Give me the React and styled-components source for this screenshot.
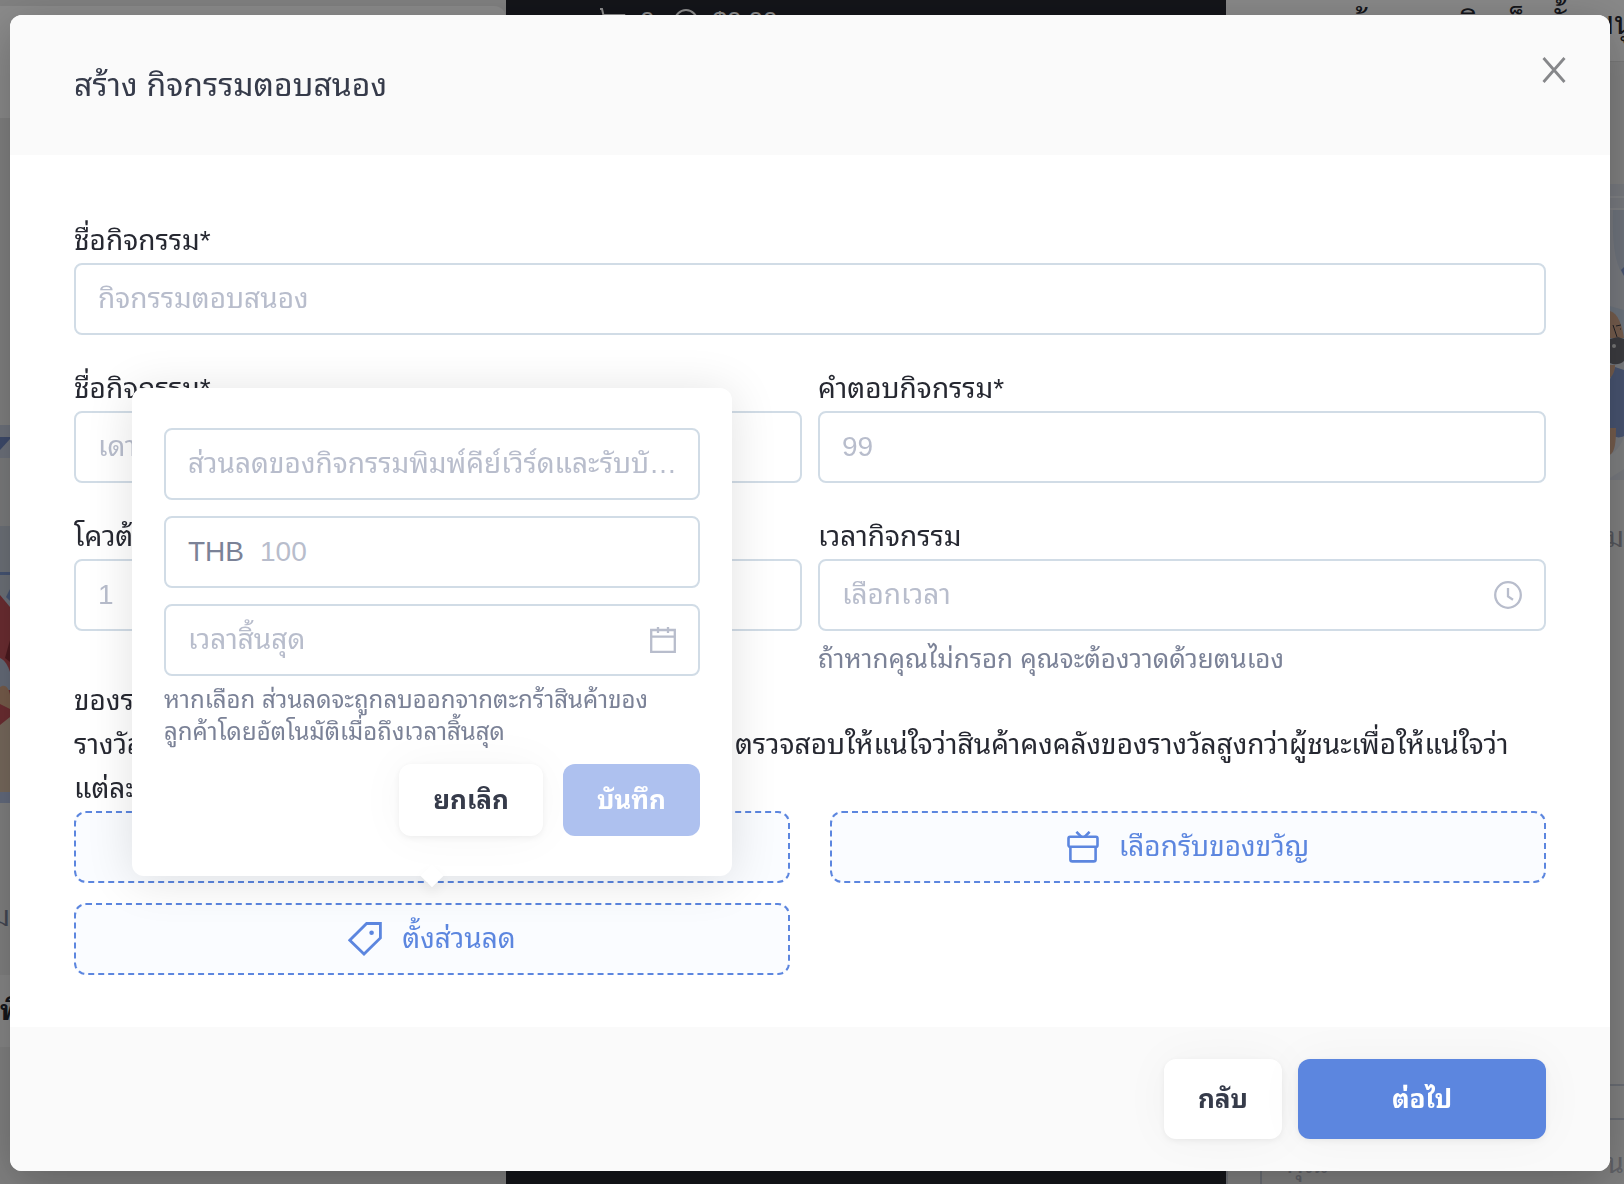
import React from 'react';
import styled, { createGlobalStyle } from "styled-components";

function App() {

  return (
    <>
      <GlobalStyle />
      <Page aria-hidden="true">
        <SidePanel $top="6px">
          <SideHead />
          <LeftArt />
          <SideNote>ม</SideNote>
          <SideCard>พิ</SideCard>
        </SidePanel>

        <Phone>
          <PhoneStat>
            <CartIcon />
            0
          </PhoneStat>
          <PhoneStat>
            <SmileIcon />
            $0.00
          </PhoneStat>
        </Phone>

        <SidePanel>
          <RightHead>สร้างแบบกิจเก็บตั้งเมนู</RightHead>
          <RightArt />
          <RightNote>อม</RightNote>
          <CommentList>
            <CommentRow />
            <CommentInput>
              <span>คุณ</span>
              <span>น</span>
            </CommentInput>
          </CommentList>
        </SidePanel>
      </Page>

      <Overlay>
        <Modal role="dialog" aria-labelledby="modal-title">
          <ModalHeader>
            <Title id="modal-title">สร้าง กิจกรรมตอบสนอง</Title>
            <CloseButton type="button" aria-label="ปิด">
              <CloseIcon />
            </CloseButton>
          </ModalHeader>

          <ModalBody>
            <Field>
              <Label htmlFor="name">ชื่อกิจกรรม*</Label>
              <InputBox>
                <Input id="name" type="text" placeholder="กิจกรรมตอบสนอง" />
              </InputBox>
            </Field>

            <Columns>
              <Field>
                <Label htmlFor="question">ชื่อกิจกรรม*</Label>
                <InputBox>
                  <Input id="question" type="text" placeholder="เดาราคา" />
                </InputBox>
              </Field>
              <Field>
                <Label htmlFor="answer">คำตอบกิจกรรม*</Label>
                <InputBox>
                  <Input id="answer" type="text" placeholder="99" />
                </InputBox>
              </Field>
              <Field>
                <Label htmlFor="quota">โควต้า</Label>
                <InputBox>
                  <Input id="quota" type="text" placeholder="1" />
                </InputBox>
              </Field>
              <Field>
                <Label htmlFor="time">เวลากิจกรรม</Label>
                <InputBox>
                  <Input id="time" type="text" placeholder="เลือกเวลา" />
                  <ClockIcon />
                </InputBox>
                <Help>ถ้าหากคุณไม่กรอก คุณจะต้องวาดด้วยตนเอง</Help>
              </Field>
            </Columns>

            <Notes>
              <p>ของรางวัล</p>
              <p>
                รางวัลจะถูกเพิ่มเข้าไปในตะกร้าสินค้าของผู้ชนะโดยอัตโนมัติ ตรวจสอบให้แน่ใจว่าสินค้าคงคลังของรางวัลสูงกว่าผู้ชนะเพื่อให้แน่ใจว่า
                <br />
                แต่ละคนได้รับรางวัล
              </p>
            </Notes>

            <Rewards>
              <RewardButton type="button">เลือกสินค้า</RewardButton>
              <RewardButton type="button">
                <GiftIcon />
                เลือกรับของขวัญ
              </RewardButton>
              <PopoverAnchor>
                <RewardButton type="button">
                  <TagIcon />
                  ตั้งส่วนลด
                </RewardButton>

                <Popover>
                  <PopoverFields>
                    <InputBox>
                      <Input
                        type="text"
                        aria-label="ชื่อส่วนลด"
                        placeholder="ส่วนลดของกิจกรรมพิมพ์คีย์เวิร์ดและรับบัตรส่วนลด" />
                    </InputBox>
                    <InputBox>
                      <Prefix htmlFor="amount">THB</Prefix>
                      <Input id="amount" type="text" placeholder="100" />
                    </InputBox>
                    <InputBox>
                      <Input type="text" aria-label="เวลาสิ้นสุด" placeholder="เวลาสิ้นสุด" />
                      <CalendarIcon />
                    </InputBox>
                  </PopoverFields>
                  <PopoverHelp>
                    หากเลือก ส่วนลดจะถูกลบออกจากตะกร้าสินค้าของ
                    <br />
                    ลูกค้าโดยอัตโนมัติเมื่อถึงเวลาสิ้นสุด
                  </PopoverHelp>
                  <PopoverActions>
                    <Button type="button">ยกเลิก</Button>
                    <Button type="button" $primary disabled>บันทึก</Button>
                  </PopoverActions>
                </Popover>
              </PopoverAnchor>
            </Rewards>
          </ModalBody>

          <ModalFooter>
            <Button type="button" $large>กลับ</Button>
            <Button type="button" $large $primary $wide>ต่อไป</Button>
          </ModalFooter>
        </Modal>
      </Overlay>
    </>
  )
}

const CloseIcon = () => (
  <svg width="24" height="26" viewBox="0 0 24 26" fill="none" stroke="#86878a" strokeWidth="2.8">
    <path d="M1.5 1 22.5 25M22.5 1 1.5 25" />
  </svg>
)

const ClockIcon = () => (
  <svg width="28" height="28" viewBox="0 0 28 28" fill="none" stroke="#b8bdcc" strokeWidth="2.3">
    <circle cx="14" cy="14" r="12.8" />
    <path d="M14 7v8.4l5 3.4" />
  </svg>
)

const CalendarIcon = () => (
  <svg width="26" height="28" viewBox="0 0 26 28" fill="none" stroke="#b8bdcc" strokeWidth="2.3">
    <path d="M1.2 4h23.6v21.8H1.2zM1.2 10.6h23.6M8 1v6M18 1v6" />
  </svg>
)

const GiftIcon = () => (
  <svg width="32" height="32" viewBox="0 0 32 32" fill="none" stroke="#5c86df" strokeWidth="2.6">
    <rect x="1.5" y="5.8" width="29" height="10" rx="1.6" />
    <path d="M3.4 15.8v12.6a2 2 0 0 0 2 2h21.2a2 2 0 0 0 2-2V15.8M9.4 .8l5 5M22.6 .8l-5 5" />
  </svg>
)

const TagIcon = () => (
  <svg width="34" height="34" viewBox="0 0 34 34" fill="none" stroke="#5c86df" strokeWidth="2.8">
    <path d="M18.6 1.5H32.4V16L16 32 1.8 18.2z" />
    <circle cx="23.6" cy="10.8" r="2.3" fill="#5c86df" stroke="none" />
  </svg>
)

const CartIcon = () => (
  <svg width="26" height="26" viewBox="0 0 26 26" fill="none" stroke="currentColor" strokeWidth="2">
    <path d="M0 1h2l4 17h14l4-11H3" />
  </svg>
)

const SmileIcon = () => (
  <svg width="24" height="24" viewBox="0 0 24 24" fill="none" stroke="currentColor" strokeWidth="2">
    <circle cx="12" cy="13" r="11" />
    <path d="M7 15c2 4 8 4 10 0" />
  </svg>
)

// illustration that peeks out at the left of the dialog
const LeftArt = () => (
  <Art width="10" height="378" viewBox="0 0 10 378">
    <path fill="#c6cee0" d="M0 0h10v378H0z" />
    <path fill="#7088c4" d="M0 12h10v2L0 25z" />
    <path fill="#dfe0e2" d="M0 33h10v68H0z" />
    <path fill="#c6cedb" d="M0 101h10v70H0z" />
    <path fill="#7f9ad2" d="M0 147h10v3H0zM10 164l-4 8 4 4z" />
    <path fill="#c4525a" d="M0 170l10 12v130H0z" />
    <path fill="#8a3038" d="M10 215l-5 18 5 4z" />
    <path fill="#b8c4dc" d="M0 233c5 2 8 8 10 14v18H0z" />
    <path fill="#d8a888" d="M0 262c6-4 9 2 10 8v14L0 279z" />
    <path fill="#d8bfa8" d="M0 300l10-8v75H0z" />
    <path fill="#b4c2e4" d="M0 367h10v11H0z" />
  </Art>
)

// illustration that peeks out at the right of the dialog
const RightArt = () => (
  <Art $end width="14" height="296" viewBox="0 0 14 296">
    <path fill="#d9dde6" d="M0 0h14v296H0z" />
    <path fill="#e8ebf0" d="M0 12h14v2H0zM0 24h14v2H0z" />
    <path fill="#c9d2e2" d="M3 26h11v66C4 80 2 55 3 26z" />
    <path fill="#8298cc" d="M14 83l-3 3 3 6z" />
    <path fill="#c4d2e4" d="M0 122l14 4v40H0z" />
    <path fill="#d4a88c" d="M0 127c8 2 12 14 14 27H0z" />
    <path fill="none" stroke="#3c3c44" d="M3 141l4 12M6 142l5-1M10 145h1" />
    <path fill="#6c6c74" d="M0 155l8-2 6 2v22c-4 4-10 4-14 2z" />
    <circle cx="4" cy="162" r="2" fill="#d9d9d9" />
    <path fill="#8298cc" d="M5 183l9 3v66c-6 3-10 1-14-3v-54z" />
    <path fill="#d4a88c" d="M0 181h5c0 6-2 10-5 13zM0 244h6c0 14-1 24-6 27z" />
    <path fill="#e6e8ea" d="M0 271c8-5 12-12 14-18v32L0 294z" />
  </Art>
)

const GlobalStyle = createGlobalStyle`
  * {
    box-sizing: border-box;
  }
  body {
    margin: 0;
    overflow: hidden;
    background: #e9e9e9;
    color: #262831;
    font-family: "Liberation Sans", "Thonburi", "Noto Sans Thai Looped", "Loma", "Garuda", "Noto Sans Thai", sans-serif;
    font-size: 28px;
    line-height: 44px;
  }
  button, input {
    font: inherit;
  }
  p, h2 {
    margin: 0;
  }
`;

const Page = styled.div`
  display: grid;
  grid-template-columns: 506fr 720fr 398fr;
  height: 100vh;
  overflow: hidden;
`;

const SidePanel = styled.div`
  display: flex;
  flex-direction: column;
  min-width: 0;
  white-space: nowrap;
  padding-top: ${({ $top }) => $top || "0"};
`;

const SideHead = styled.div`
  height: 112px;
  flex: none;
  margin-bottom: 307px;
  border-radius: 0 12px 0 0;
  background: #fbfbfb;
`;

const Art = styled.svg`
  flex: none;
  align-self: ${({ $end }) => ($end ? "flex-end" : "flex-start")};
`;

const SideNote = styled.div`
  width: 10px;
  margin-top: 92px;
  display: flex;
  justify-content: flex-end;
  color: #7b8297;
`;

const SideCard = styled.div`
  width: 10px;
  height: 72px;
  margin-top: 36px;
  display: flex;
  align-items: center;
  background: #f4f4f4;
  font-weight: bold;
`;

const Phone = styled.div`
  display: flex;
  gap: 20px;
  padding: 8px 94px;
  background: #24262e;
  color: #fff;
  font-size: 26px;
  line-height: 26px;
`;

const PhoneStat = styled.div`
  display: flex;
  align-items: flex-start;
  height: 26px;
  gap: 14px;
`;

const RightHead = styled.div`
  height: 62px;
  flex: none;
  margin-bottom: 122px;
  padding-left: 108px;
  border-bottom: 1px solid #dcdcdc;
  background: #f8f8f8;
  font-size: 32px;
  line-height: 46px;
`;

const RightNote = styled.div`
  display: flex;
  justify-content: flex-end;
  margin-top: 36px;
  color: #9a9ca6;
`;

const CommentList = styled.div`
  margin-top: 524px;
  border-left: 2px solid #c8ccd6;
`;

const CommentRow = styled.div`
  height: 36px;
  border: solid #c0c6d2;
  border-width: 2px 0;
`;

const CommentInput = styled.div`
  display: flex;
  justify-content: space-between;
  margin-left: 32px;
  padding: 22px 0 22px 24px;
  border-left: 2px solid #c0c6d2;
  color: #b0b2bc;
`;

const Overlay = styled.div`
  position: fixed;
  inset: 0;
  padding: 15px 14px 13px 10px;
  background: rgb(0 0 0 /45%);
`;

const Modal = styled.section`
  border-radius: 12px;
  background: #fff;
  box-shadow: 0 12px 48px rgb(0 0 0 /25%);
`;

const ModalHeader = styled.header`
  display: flex;
  justify-content: space-between;
  align-items: flex-start;
  padding: 48px 44px 48px 64px;
  border-radius: 12px 12px 0 0;
  background: #fafafa;
`;

const Title = styled.h2`
  color: #363b4a;
  font-size: 32px;
  font-weight: normal;
  line-height: 44px;
`;

const CloseButton = styled.button`
  display: flex;
  padding: 0;
  margin-top: -6px;
  border: 0;
  background: none;
  cursor: pointer;
`;

const ModalBody = styled.div`
  padding: 64px 64px 52px;
`;

const Field = styled.div`
  min-width: 0;
`;

const Columns = styled.div`
  display: grid;
  grid-template-columns: 1fr 1fr;
  gap: 32px 16px;
  margin-top: 32px;
`;

const Label = styled.label`
  display: block;
`;

const InputBox = styled.div`
  display: flex;
  align-items: center;
  gap: 16px;
  height: 72px;
  padding: 0 18px 0 22px;
  border: 2px solid #d1dce6;
  border-radius: 8px;
  background: #fff;

  svg {
    flex: none;
    margin-right: 4px;
  }
`;

const Input = styled.input`
  flex: 1;
  min-width: 0;
  width: 100%;
  height: 44px;
  padding: 0;
  border: 0;
  outline: 0;
  background: none;
  color: #363b4a;
  text-overflow: ellipsis;

  &::placeholder {
    color: #b8bdcc;
    opacity: 1;
  }
`;

const Prefix = styled.label`
  color: #7b8297;
`;

const Help = styled.p`
  padding-top: 8px;
  color: #7b8297;
  font-size: 26px;
  line-height: 40px;
`;

const Notes = styled.div`
  p {
    white-space: nowrap;
  }
`;

const Rewards = styled.div`
  display: grid;
  grid-template-columns: 1fr 1fr;
  gap: 20px 40px;
`;

const RewardButton = styled.button`
  display: flex;
  align-items: center;
  justify-content: center;
  gap: 20px;
  width: 100%;
  height: 72px;
  border: 2px dashed #5c86df;
  border-radius: 12px;
  background: #fafcff;
  color: #5c86df;
  cursor: pointer;
`;

const PopoverAnchor = styled.div`
  position: relative;
`;

const Popover = styled.div`
  position: absolute;
  left: 50%;
  bottom: calc(100% + 27px);
  width: 600px;
  padding: 40px 32px;
  transform: translateX(-50%);
  border-radius: 12px;
  background: #fff;
  box-shadow: 0 4px 48px rgb(0 0 0 /12%);

  &::after {
    content: "";
    position: absolute;
    left: 50%;
    bottom: -8px;
    width: 16px;
    height: 16px;
    margin-left: -8px;
    transform: rotate(45deg);
    background: #fff;
    box-shadow: 4px 4px 12px rgb(0 0 0 /6%);
  }
`;

const PopoverFields = styled.div`
  display: flex;
  flex-direction: column;
  gap: 16px;
`;

const PopoverHelp = styled(Help)`
  font-size: 24px;
  line-height: 32px;
`;

const PopoverActions = styled.div`
  display: flex;
  justify-content: flex-end;
  gap: 20px;
  margin-top: 16px;
`;

const Button = styled.button`
  min-width: ${({ $wide }) => ($wide ? "248px" : "0")};
  height: ${({ $large }) => ($large ? "80px" : "72px")};
  padding: 0 34px;
  border: 0;
  border-radius: 12px;
  background: ${({ $primary }) => ($primary ? "#5c86df" : "#fff")};
  color: ${({ $primary }) => ($primary ? "#fff" : "#363b4a")};
  font-size: 26px;
  font-weight: bold;
  box-shadow: 0 2px 6px rgb(0 0 0 /6%), 0 0 48px rgb(0 0 0 /4%);
  cursor: pointer;

  &:disabled {
    background: #aec1ef;
    box-shadow: none;
    cursor: default;
  }
`;

const ModalFooter = styled.footer`
  display: flex;
  justify-content: flex-end;
  gap: 16px;
  padding: 32px 64px;
  border-radius: 0 0 12px 12px;
  background: #fafafa;
`;

export default App;
